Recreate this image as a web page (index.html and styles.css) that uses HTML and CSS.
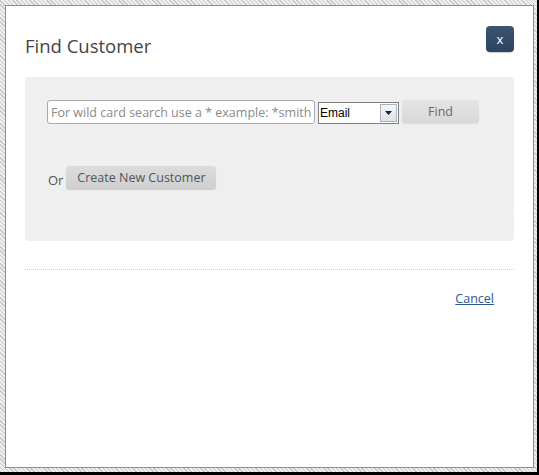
FILE: index.html
```html
<!DOCTYPE html>
<html lang="en">
<head>
<meta charset="utf-8">
<title>Find Customer</title>
<link rel="stylesheet" href="styles.css">
</head>
<body>
<div class="screen">
  <div class="frame">
    <div class="dialog">
      <div class="header">
        <h1 class="title">Find Customer</h1>
        <button class="close" type="button">x</button>
      </div>
      <div class="panel">
        <div class="panel-main">
          <div class="search-row">
            <input class="search" type="text" placeholder="For wild card search use a * example: *smith">
            <div class="select"><span class="select-value">Email</span><span class="select-arrow"><svg width="7" height="4" viewBox="0 0 7 4"><path d="M0 0H7L3.5 4Z" fill="#222"/></svg></span></div>
            <button class="btn btn-find" type="button">Find</button>
          </div>
          <div class="create-row">
            <span class="or">Or</span>
            <button class="btn btn-create" type="button">Create New Customer</button>
          </div>
        </div>
        <div class="panel-foot"></div>
      </div>
      <div class="divider"></div>
      <div class="footer">
        <a class="cancel" href="#">Cancel</a>
      </div>
    </div>
  </div>
</div>
</body>
</html>
```

FILE: styles.css
```css
html, body {
  margin: 0;
  padding: 0;
  background: #000;
}
.screen {
  width: 539px;
  height: 475px;
  box-sizing: border-box;
  padding: 0 2px 3px 0;
  background: #000;
}
.frame {
  height: 100%;
  box-sizing: border-box;
  padding: 5px 3px 4px 5px;
  background: repeating-linear-gradient(45deg, #c8c8cc 0 1px, #eeeef0 1px 3px);
}
.dialog {
  height: 100%;
  box-sizing: border-box;
  border: 1px solid #8e8e8e;
  background: #fff;
  padding: 20px 19px;
  font-family: "Open Sans", "Noto Sans", sans-serif;
  color: #555;
}
.header {
  display: flex;
  justify-content: space-between;
  align-items: flex-start;
}
.title {
  margin: 7px 0 0 0;
  font-size: 18.5px;
  line-height: 26px;
  font-weight: 400;
  color: #444;
}
.close {
  width: 28px;
  height: 26px;
  margin: 0;
  padding: 0;
  border: none;
  border-radius: 4px;
  background: linear-gradient(#3a5471, #2c4460);
  color: #fff;
  font-family: "Open Sans", sans-serif;
  font-size: 13px;
  line-height: 24px;
  box-shadow: 0 1px 1px rgba(0,0,0,0.2);
}
.panel {
  margin-top: 18px;
}
.panel-main {
  background: #efefef;
  border-radius: 4px 4px 2px 2px;
  padding: 23px 22px 21px 22px;
}
.panel-foot {
  height: 30px;
  background: #efefef;
  border-radius: 1px 1px 4px 4px;
  border-top: 1px solid #f3f3f3;
}
.search-row {
  display: flex;
  align-items: flex-end;
  gap: 3px;
}
.search {
  width: 268px;
  height: 24px;
  box-sizing: border-box;
  margin: 0;
  padding: 0 3px;
  border: 1px solid #a9a9a9;
  border-radius: 3px;
  background: #fff;
  font-family: "Open Sans", sans-serif;
  font-size: 12.5px;
  color: #333;
}
.search::placeholder {
  color: #8a8a8a;
}
.select {
  width: 81px;
  height: 22px;
  box-sizing: border-box;
  border: 1px solid #7f7f7f;
  background: #fff;
  display: flex;
  align-items: stretch;
}
.select-value {
  flex: 1;
  padding-left: 1px;
  font-family: "Liberation Sans", Arial, sans-serif;
  font-size: 12px;
  line-height: 21px;
  color: #000;
}
.select-arrow {
  width: 15px;
  margin: 1px;
  border: 1px solid #a8b3c0;
  background: linear-gradient(#f4f6f9, #dde3ea);
  display: flex;
  align-items: center;
  justify-content: center;
}
.btn {
  margin: 0;
  border: none;
  border-radius: 3px;
  font-family: "Open Sans", sans-serif;
  font-size: 12.5px;
  padding: 0;
  cursor: pointer;
}
.btn-find {
  width: 77px;
  height: 23px;
  margin-bottom: 1px;
  background: linear-gradient(#e4e4e4, #d8d8d8);
  color: #6a6a6a;
  box-shadow: 0 1px 1px rgba(0,0,0,0.08);
}
.create-row {
  display: flex;
  align-items: flex-end;
  margin-top: 42px;
  gap: 3px;
}
.or {
  font-size: 13px;
  line-height: 18px;
  color: #555;
  padding-left: 1px;
}
.btn-create {
  width: 150px;
  height: 23px;
  background: linear-gradient(#dcdcdc, #cfcfcf);
  color: #555;
  box-shadow: 0 1px 1px rgba(0,0,0,0.15);
}
.divider {
  margin-top: 28px;
  border-top: 1px dotted #cfcfcf;
}
.footer {
  display: flex;
  justify-content: flex-end;
  padding: 20px 20px 0 0;
}
.cancel {
  font-size: 12.5px;
  color: #2b5895;
  text-decoration: underline;
}
```
